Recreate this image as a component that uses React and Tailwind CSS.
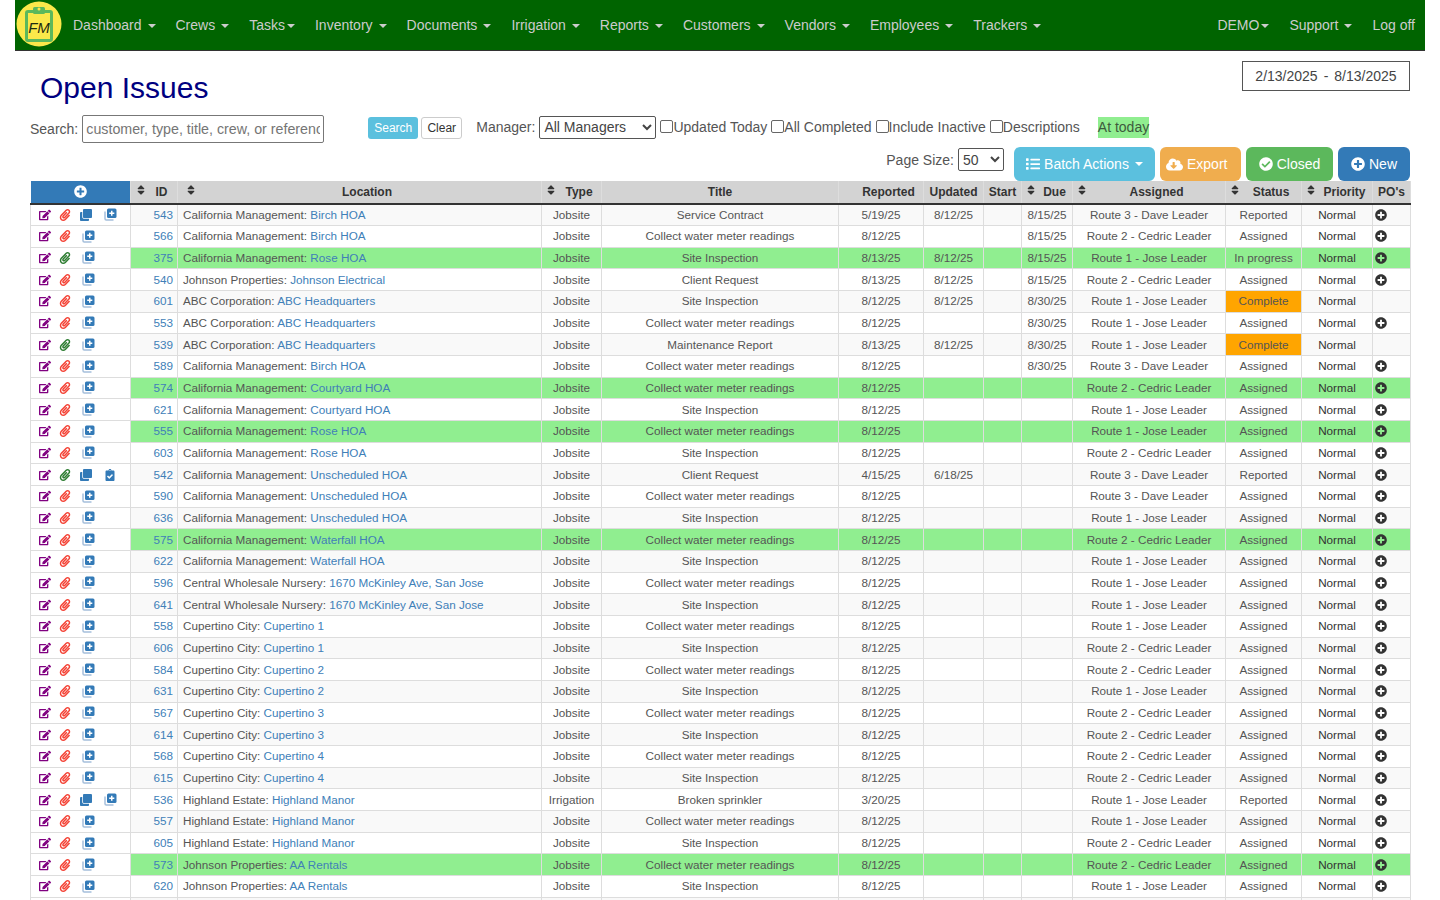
import { FaEdit, FaPaperclip, FaClone, FaPlusCircle, FaCheckCircle, FaCloudDownloadAlt, FaList, FaClipboardCheck, FaSort } from "react-icons/fa";

const NAV = ["Dashboard", "Crews", "Tasks", "Inventory", "Documents", "Irrigation", "Reports", "Customers", "Vendors", "Employees", "Trackers"];

const CA = "California Management";
const ABC = "ABC Corporation";
const CW = "Central Wholesale Nursery";
const CC = "Cupertino City";
const HE = "Highland Estate";
const JP = "Johnson Properties";
const METER = "Collect water meter readings";
const SITE = "Site Inspection";
const R1 = "Route 1 - Jose Leader";
const R2 = "Route 2 - Cedric Leader";
const R3 = "Route 3 - Dave Leader";

// id, customer, site, title, reported, updated, due, assigned, status, flags
const ROWS = [
  [543, CA, "Birch HOA", "Service Contract", "5/19/25", "8/12/25", "8/15/25", R3, "Reported", { copy: true }],
  [566, CA, "Birch HOA", METER, "8/12/25", "", "8/15/25", R2, "Assigned", {}],
  [375, CA, "Rose HOA", SITE, "8/13/25", "8/12/25", "8/15/25", R1, "In progress", { green: true, clip: true }],
  [540, JP, "Johnson Electrical", "Client Request", "8/13/25", "8/12/25", "8/15/25", R2, "Assigned", {}],
  [601, ABC, "ABC Headquarters", SITE, "8/12/25", "8/12/25", "8/30/25", R1, "Complete", { noPo: true }],
  [553, ABC, "ABC Headquarters", METER, "8/12/25", "", "8/30/25", R1, "Assigned", {}],
  [539, ABC, "ABC Headquarters", "Maintenance Report", "8/13/25", "8/12/25", "8/30/25", R1, "Complete", { noPo: true, clip: true }],
  [589, CA, "Birch HOA", METER, "8/12/25", "", "8/30/25", R3, "Assigned", {}],
  [574, CA, "Courtyard HOA", METER, "8/12/25", "", "", R2, "Assigned", { green: true }],
  [621, CA, "Courtyard HOA", SITE, "8/12/25", "", "", R1, "Assigned", {}],
  [555, CA, "Rose HOA", METER, "8/12/25", "", "", R1, "Assigned", { green: true }],
  [603, CA, "Rose HOA", SITE, "8/12/25", "", "", R2, "Assigned", {}],
  [542, CA, "Unscheduled HOA", "Client Request", "4/15/25", "6/18/25", "", R3, "Reported", { copy: true, clip: true, board: true }],
  [590, CA, "Unscheduled HOA", METER, "8/12/25", "", "", R3, "Assigned", {}],
  [636, CA, "Unscheduled HOA", SITE, "8/12/25", "", "", R1, "Assigned", {}],
  [575, CA, "Waterfall HOA", METER, "8/12/25", "", "", R2, "Assigned", { green: true }],
  [622, CA, "Waterfall HOA", SITE, "8/12/25", "", "", R1, "Assigned", {}],
  [596, CW, "1670 McKinley Ave, San Jose", METER, "8/12/25", "", "", R1, "Assigned", {}],
  [641, CW, "1670 McKinley Ave, San Jose", SITE, "8/12/25", "", "", R1, "Assigned", {}],
  [558, CC, "Cupertino 1", METER, "8/12/25", "", "", R1, "Assigned", {}],
  [606, CC, "Cupertino 1", SITE, "8/12/25", "", "", R2, "Assigned", {}],
  [584, CC, "Cupertino 2", METER, "8/12/25", "", "", R2, "Assigned", {}],
  [631, CC, "Cupertino 2", SITE, "8/12/25", "", "", R1, "Assigned", {}],
  [567, CC, "Cupertino 3", METER, "8/12/25", "", "", R2, "Assigned", {}],
  [614, CC, "Cupertino 3", SITE, "8/12/25", "", "", R2, "Assigned", {}],
  [568, CC, "Cupertino 4", METER, "8/12/25", "", "", R2, "Assigned", {}],
  [615, CC, "Cupertino 4", SITE, "8/12/25", "", "", R2, "Assigned", {}],
  [536, HE, "Highland Manor", "Broken sprinkler", "3/20/25", "", "", R1, "Reported", { copy: true, irrigation: true }],
  [557, HE, "Highland Manor", METER, "8/12/25", "", "", R1, "Assigned", {}],
  [605, HE, "Highland Manor", SITE, "8/12/25", "", "", R2, "Assigned", {}],
  [573, JP, "AA Rentals", METER, "8/12/25", "", "", R2, "Assigned", { green: true }],
  [620, JP, "AA Rentals", SITE, "8/12/25", "", "", R1, "Assigned", {}],
  [0, "", "", "", "", "", "", "", "", { noPo: true, blank: true }],
];

const WIDTHS = [100, 47, 364, 60, 237, 85, 60, 38, 51, 153, 76, 71, 38];

const HEADS = [
  ["ID", "left-[1px]", true],
  ["Location", "left-[4px]", true],
  ["Type", "left-[0px]", true],
  ["Title", "", false],
  ["Reported", "left-[0px]", true, true],
  ["Updated", "", false],
  ["Start", "", false],
  ["Due", "left-[0px]", true],
  ["Assigned", "left-[0px]", true],
  ["Status", "left-[0px]", true],
  ["Priority", "left-[0px]", true],
  ["PO's", "", false],
];

const Caret = ({ tight }) => (
  <span className={`inline-block ${tight ? "ml-[2px]" : "ml-[6px]"} align-middle border-x-[4px] border-x-transparent border-t-[4px] border-t-current`} />
);

const Logo = () => (
  <svg width="46" height="46" viewBox="0 0 46 46" className="shrink-0">
    <circle cx="23" cy="23" r="22.5" fill="#fbe84a" />
    <rect x="10.5" y="10.5" width="25" height="29" rx="1.5" fill="#fbe84a" stroke="#5cb85c" strokeWidth="3" />
    <rect x="17" y="6" width="12" height="7" rx="1.5" fill="#5cb85c" />
    <circle cx="23" cy="8" r="1.5" fill="#fbe84a" />
    <text x="23" y="32" textAnchor="middle" fontSize="15" fontStyle="italic" fill="#1c2a12" fontFamily="Liberation Sans">FM</text>
  </svg>
);

// stacked square with a plus, no icon package has this one
const CopyPlus = () => (
  <svg width="13" height="13" viewBox="0 0 13 13">
    <path d="M1 3.5v7.3A1.2 1.2 0 0 0 2.2 12h7.3" fill="none" stroke="#a5bfdb" strokeWidth="1.5" />
    <rect x="3" y="0.5" width="9.5" height="9.5" rx="1.5" fill="#337ab7" />
    <path d="M7.75 2.7v5.1M5.2 5.25h5.1" stroke="#fff" strokeWidth="1.5" />
  </svg>
);

const Btn = ({ className, children }) => (
  <div className={`h-[34px] flex items-center rounded-[6px] text-white text-[14px] ${className}`}>
    {children}
  </div>
);

const Row = ({ r }) => {
  const [id, customer, site, title, reported, updated, due, assigned, status, f] = r;
  const bg = f.green ? "bg-[#90ee90]" : "";
  const td = `border border-[#ddd] px-[5px] py-0 overflow-hidden whitespace-nowrap ${bg}`;
  return (
    <tr className="h-[21.68px] odd:bg-[#f9f9f9]">
      <td className="border border-[#ddd] bg-white p-0">
        {!f.blank && (
          <div className="flex items-center h-[20px]">
            <FaEdit className="ml-[8px] text-[12px] text-[#800080]" />
            <FaPaperclip className={`ml-[8px] text-[12px] ${f.clip ? "text-[#2e7d32]" : "text-[#f44336]"}`} />
            {f.copy ? (
              <>
                <FaClone className="ml-[9px] text-[12px] text-[#337ab7]" />
                <span className="ml-[12px]">{f.board ? <FaClipboardCheck className="text-[12px] text-[#337ab7]" /> : <CopyPlus />}</span>
              </>
            ) : (
              <span className="ml-[11px]"><CopyPlus /></span>
            )}
          </div>
        )}
      </td>
      <td className={`${td} !pr-[4px] text-right text-[#4080b8]`}>{id || ""}</td>
      <td className={td}>
        {customer && `${customer}: `}
        <span className="text-[#4080b8]">{site}</span>
      </td>
      <td className={`${td} text-center`}>{f.blank ? "" : f.irrigation ? "Irrigation" : "Jobsite"}</td>
      <td className={`${td} text-center`}>{title}</td>
      <td className={`${td} text-center`}>{reported}</td>
      <td className={`${td} text-center`}>{updated}</td>
      <td className={td}></td>
      <td className={`${td} text-center`}>{due}</td>
      <td className={`${td} text-center`}>{assigned}</td>
      <td className={`${td} text-center ${status === "Complete" ? "bg-[#ffa500]" : ""}`}>{status}</td>
      <td className={`${td} text-center text-[#333]`}>{f.blank ? "" : "Normal"}</td>
      <td className={`${td} !px-[2px]`}>{!f.noPo && <FaPlusCircle className="text-[12px] text-[#333]" />}</td>
    </tr>
  );
};

export default function App() {
  return (
    <div className="w-[1440px] h-[900px] overflow-hidden bg-white text-[#555] font-['Liberation_Sans',Arial,sans-serif]">
      {/* NAVBAR */}
      <nav className="mx-[15px] h-[51px] bg-[#006400] border-b border-[#333] flex items-center text-[14px] text-[#ccc]">
        <div className="ml-[1px] mr-[11px] mb-[3px]"><Logo /></div>
        <div className="flex items-center gap-[20px]">
          {NAV.map((n) => (
            <span key={n} className="whitespace-nowrap">
              {n}
              <Caret tight={n === "Tasks"} />
            </span>
          ))}
        </div>
        <div className="ml-auto mr-[10px] flex items-center gap-[20px]">
          <span>DEMO<Caret tight /></span>
          <span>Support<Caret /></span>
          <span>Log off</span>
        </div>
      </nav>

      <div className="px-[30px]">
        {/* TITLE + DATE RANGE */}
        <div className="flex justify-between h-[57px]">
          <h1 className="ml-[10px] mt-[19px] text-[30px] leading-[36px] text-[#000080]">Open Issues</h1>
          <div className="mt-[10px] w-[168px] h-[30px] border border-[#555] flex items-center justify-center gap-[6px] text-[14px] text-[#444]">
            <span>2/13/2025</span><span>-</span><span>8/13/2025</span>
          </div>
        </div>

        {/* FILTERS */}
        <div className="flex items-center h-[28px] mt-[7px] text-[14px]">
          <span>Search:</span>
          <input
            readOnly
            placeholder="customer, type, title, crew, or reference"
            className="ml-[4px] w-[242px] h-[28px] border border-[#777] rounded-[2px] px-[3px] text-[14.25px] placeholder:text-[#757575] outline-none"
          />
          <div className="self-stretch flex items-center pb-[4px]">
            <div className="ml-[44px] mt-[2px] w-[50px] h-[22px] bg-[#5bc0de] rounded-[3px] text-white text-[12px] flex items-center justify-center">Search</div>
            <div className="ml-[3px] mt-[2px] w-[41px] h-[22px] bg-white border border-[#ccc] rounded-[3px] text-[#333] text-[12px] flex items-center justify-center">Clear</div>
            <span className="ml-[14px]">Manager:</span>
            <select className="ml-[4px] w-[117px] h-[23px] border border-[#555] rounded-[2px] text-[14px] text-[#444] bg-white" defaultValue="All Managers">
              <option>All Managers</option>
            </select>
            {["Updated Today", "All Completed", "Include Inactive", "Descriptions"].map((l) => (
              <label key={l} className="ml-[4px] flex items-center">
                <span className="w-[13px] h-[13px] border border-[#666] rounded-[2px] bg-white mb-[2px]" />
                {l}
              </label>
            ))}
            <span className="ml-[18px] bg-[#90ee90] text-[#3d5a3d]">At today</span>
          </div>
        </div>

        {/* PAGE SIZE + ACTIONS */}
        <div className="flex items-start justify-end h-[34px] mt-[4px] text-[14px]">
          <span className="mt-[3px]">Page Size:</span>
          <select className="ml-[4px] mt-[1px] w-[46px] h-[23px] border border-[#555] rounded-[2px] text-[14px] text-[#444] bg-white" defaultValue="50">
            <option>50</option>
          </select>
          <Btn className="ml-[10px] w-[141px] justify-center bg-[#5bc0de]"><FaList className="mr-[4px] text-[14px]" />Batch Actions<Caret /></Btn>
          <Btn className="ml-[5px] w-[81px] pl-[6px] bg-[#f0ad4e]"><FaCloudDownloadAlt className="mr-[4px] text-[17px]" />Export</Btn>
          <Btn className="ml-[5px] w-[87px] justify-center bg-[#5cb85c]"><FaCheckCircle className="mr-[4px] text-[14px]" />Closed</Btn>
          <Btn className="ml-[5px] w-[72px] justify-center bg-[#337ab7]"><FaPlusCircle className="mr-[4px] text-[14px]" />New</Btn>
        </div>

        {/* TABLE */}
        <table className="table-fixed border-collapse w-[1380px] text-[11.7px] leading-[14px]">
          <colgroup>
            {WIDTHS.map((w, i) => <col key={i} style={{ width: w }} />)}
          </colgroup>
          <thead>
            <tr className="h-[22.7px] bg-[#d3d3d3] text-[#333] border-b-[2px] border-b-[#333]">
              <th className="bg-[#337ab7] p-0">
                <FaPlusCircle className="mx-auto text-[13px] text-white" />
              </th>
              {HEADS.map(([h, iconPos, pad, noIcon]) => (
                <th key={h} className="border-x border-[#ddd] px-[3px] py-0 text-center text-[12px] font-bold whitespace-nowrap">
                  <div className={`relative ${pad ? "pl-[15px]" : ""}`}>
                    {pad && !noIcon && <FaSort className={`absolute top-[-1px] text-[12px] text-[#333] ${iconPos}`} />}
                    {h}
                  </div>
                </th>
              ))}
            </tr>
          </thead>
          <tbody>
            {ROWS.map((r, i) => <Row key={i} r={r} />)}
          </tbody>
        </table>
      </div>
    </div>
  );
}
